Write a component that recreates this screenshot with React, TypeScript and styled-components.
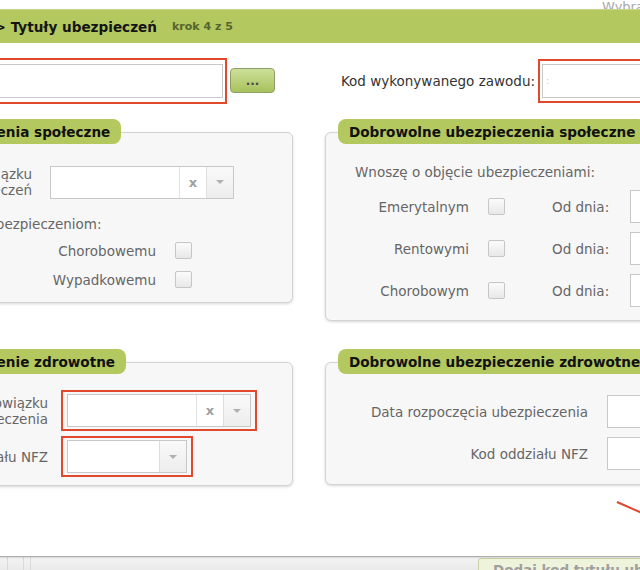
import React from "react";
import styled, { createGlobalStyle } from "styled-components";

// the dialog is wider than the window; this much of it sits left of x=0
const SHIFT = 213;
// left column panels: inner widths measured from the panel's left edge (page x = -SHIFT)
const LEFT_PANEL = SHIFT + 293;

const GlobalStyle = createGlobalStyle`
  html, body {
    margin: 0;
    padding: 0;
    background: #fff;
  }
  body {
    font-family: "DejaVu Sans", Verdana, sans-serif;
    font-size: 13.5px;
    color: #333;
  }
  * {
    box-sizing: border-box;
  }
`;

const Viewport = styled.div`
  position: relative;
  width: 640px;
  height: 570px;
  overflow: hidden;
  background: #fff;
`;

const TopStrip = styled.div`
  height: 9px;
  display: flex;
  overflow: hidden;
  padding-left: 13px;
`;

const PageEdge = styled.div`
  width: 1px;
  background: #e6e6e6;
`;

const BehindText = styled.div`
  margin-left: 589px;
  white-space: nowrap;
  color: #a8a8a8;
  font-size: 13px;
  line-height: 14px;
`;

const Modal = styled.div`
  position: relative;
  z-index: 1;
  width: 1100px;
  height: 547px;
  margin-left: -${SHIFT}px;
  background: #fff;
  box-shadow: 0 1px 2px rgba(0, 0, 0, 0.28);
  display: flex;
  flex-direction: column;
`;

const Header = styled.div`
  height: 34px;
  background: #b3c85e;
  border-top: 1px solid #c6d68a;
  display: flex;
  align-items: center;
`;

const Breadcrumb = styled.div`
  width: ${SHIFT + 157}px;
  text-align: right;
  white-space: nowrap;
  font-size: 13.6px;
  font-weight: bold;
  color: #141414;
`;

const Step = styled.span`
  margin-left: 15px;
  font-size: 11px;
  font-weight: bold;
  color: #56652f;
`;

const TopRow = styled.div`
  display: flex;
  align-items: center;
  height: 47px;
  margin-top: 14px;
`;

const FieldGroup = styled.div<{ $width: number }>`
  width: ${(p) => p.$width}px;
  flex: none;
  display: flex;
  align-items: center;
`;

const HiddenLabel = styled.div`
  width: 188px;
  flex: none;
  padding-left: 20px;
  white-space: nowrap;
  overflow: hidden;
`;

const Frame = styled.div<{ $pad?: string; $grow?: boolean }>`
  display: flex;
  border: 2px solid #e2482c;
  padding: ${(p) => p.$pad || "2px 4px"};
  flex: ${(p) => (p.$grow ? "1 1 auto" : "none")};
`;

const TextInput = styled.div<{ $width?: number; $height?: number }>`
  width: ${(p) => (p.$width ? `${p.$width}px` : "auto")};
  height: ${(p) => p.$height || 33}px;
  border: 1px solid #c8c8c8;
  background: #fff;
  display: flex;
  align-items: center;
  flex: ${(p) => (p.$width ? "none" : "1 1 auto")};
`;

const Mask = styled.span`
  padding-left: 3px;
  font-size: 9px;
  color: #c4c4c4;
`;

const DotsButton = styled.button`
  margin-left: 3px;
  width: 45px;
  height: 25px;
  flex: none;
  padding: 0;
  border: 1px solid #8f9d6c;
  border-radius: 4px;
  background: linear-gradient(#cde09a, #a8c25c);
  color: #4a4a4a;
  font-family: inherit;
  font-size: 12px;
  font-weight: bold;
  line-height: 1;
`;

const RowLabel = styled.div<{ $width: number; $gap?: number }>`
  width: ${(p) => p.$width}px;
  flex: none;
  padding-right: ${(p) => p.$gap || 0}px;
  text-align: right;
  white-space: nowrap;
  color: #333;
`;

const PanelGrid = styled.div`
  display: grid;
  grid-template-columns: ${LEFT_PANEL}px 506px;
  column-gap: 32px;
  row-gap: 28px;
  align-items: start;
  margin-top: 15px;
`;

const Panel = styled.section`
  display: flex;
  flex-direction: column;
  align-items: flex-start;
`;

const Tab = styled.div`
  position: relative;
  z-index: 1;
  height: 25px;
  margin-left: 13px;
  margin-bottom: -12px;
  padding: 0 11px;
  border-radius: 8px;
  background: #b3c85e;
  color: #111;
  font-size: 13.6px;
  font-weight: bold;
  line-height: 26px;
  white-space: nowrap;
`;

const Box = styled.div<{ $top: number; $bottom: number }>`
  align-self: stretch;
  padding: ${(p) => p.$top}px 20px ${(p) => p.$bottom}px 29px;
  border: 1px solid #d3d3d3;
  border-radius: 6px;
  background: #f7f7f7;
  box-shadow: 0 1px 3px rgba(0, 0, 0, 0.16);
  display: flex;
  flex-direction: column;
`;

const Row = styled.div<{ $height?: number; $mt?: number }>`
  display: flex;
  align-items: center;
  height: ${(p) => p.$height || 33}px;
  margin-top: ${(p) => p.$mt || 0}px;
`;

const Label = styled.div<{ $width: number }>`
  width: ${(p) => p.$width}px;
  flex: none;
  text-align: right;
  white-space: nowrap;
  color: #666;
  line-height: 16px;
`;

const Note = styled.div<{ $mt?: number; $indent?: number }>`
  height: 18px;
  line-height: 18px;
  margin-top: ${(p) => p.$mt || 0}px;
  padding-left: ${(p) => p.$indent || 0}px;
  white-space: nowrap;
  color: #666;
`;

const Spacer = styled.div<{ $w: number }>`
  width: ${(p) => p.$w}px;
  flex: none;
`;

const Checkbox = styled.span`
  width: 17px;
  height: 17px;
  flex: none;
  border: 1px solid #c6c6c6;
  border-radius: 2px;
  background: linear-gradient(#fbfbfb, #e8e8e8);
`;

const Inline = styled.div<{ $width: number }>`
  width: ${(p) => p.$width}px;
  flex: none;
  color: #666;
  white-space: nowrap;
`;

const Combo = styled.div<{ $width: number }>`
  width: ${(p) => p.$width}px;
  height: 33px;
  flex: none;
  display: flex;
  border: 1px solid #c8c8c8;
  background: #fff;
`;

const ComboValue = styled.div`
  flex: 1;
`;

const ClearCell = styled.div`
  width: 27px;
  border-left: 1px solid #e2e2e2;
  display: flex;
  align-items: center;
  justify-content: center;
  color: #a0a0a0;
  font-size: 13px;
  font-weight: bold;
`;

const ArrowCell = styled.div`
  width: 27px;
  border-left: 1px solid #dedede;
  background: linear-gradient(#f9f9f9, #ededed);
  display: flex;
  align-items: center;
  justify-content: center;

  &::after {
    content: "";
    border-left: 4px solid transparent;
    border-right: 4px solid transparent;
    border-top: 4px solid #b0b0b0;
  }
`;

const BottomStrip = styled.div`
  height: 14px;
  display: flex;
  align-items: flex-start;
  border-top: 1px solid #d6d6d6;
  background: linear-gradient(#f3f3f3, #eaeaea);
`;

const Rule = styled.div<{ $ml: number }>`
  width: 1px;
  height: 100%;
  margin-left: ${(p) => p.$ml}px;
  background: #dadada;
  flex: none;
`;

const AddButton = styled.div`
  margin-left: 447px;
  margin-top: 1px;
  height: 20px;
  padding: 3px 14px 0;
  border: 1px solid #c9d2a6;
  border-radius: 3px;
  background: #eef3dc;
  color: #a0a0a0;
  font-weight: bold;
  white-space: nowrap;
`;

const Pointer = styled.svg`
  position: absolute;
  left: 600px;
  top: 490px;
  z-index: 2;
`;

const ComboBox: React.FC<{ width: number; clear?: boolean }> = ({ width, clear }) => (
  <Combo $width={width}>
    <ComboValue />
    {clear && <ClearCell>x</ClearCell>}
    <ArrowCell />
  </Combo>
);

const voluntary = ["Emerytalnym", "Rentowymi", "Chorobowym"];

export default function App() {
  return (
    <>
      <GlobalStyle />
      <Viewport>
        <TopStrip>
          <PageEdge />
          <BehindText>Wybrano tytuł</BehindText>
        </TopStrip>

        <Modal>
          <Header>
            <Breadcrumb>Ubezpieczony &gt; Tytuły ubezpieczeń</Breadcrumb>
            <Step>krok 4 z 5</Step>
          </Header>

          <TopRow>
            <FieldGroup $width={SHIFT + 227}>
              <HiddenLabel>Kod tytułu ubezpieczenia:</HiddenLabel>
              <Frame $pad="4px 2px" $grow>
                <TextInput $height={34} />
              </Frame>
            </FieldGroup>
            <DotsButton>...</DotsButton>
            <RowLabel $width={263} $gap={3}>
              Kod wykonywanego zawodu:
            </RowLabel>
            <Frame $pad="3px 2px">
              <TextInput $width={300} $height={34}>
                <Mask>:</Mask>
              </TextInput>
            </Frame>
          </TopRow>

          <PanelGrid>
            <Panel>
              <Tab>Obowiązkowe ubezpieczenia społeczne</Tab>
              <Box $top={32} $bottom={8}>
                <Row $height={34}>
                  <Label $width={SHIFT + 2}>
                    Rodzaj obowiązku
                    <br />
                    ubezpieczeń
                  </Label>
                  <Spacer $w={18} />
                  <ComboBox width={184} clear />
                </Row>
                <Note $mt={16} $indent={SHIFT - 208}>
                  Podlegam obowiązkowo ubezpieczeniom:
                </Note>
                <Row $height={29} $mt={3}>
                  <Label $width={SHIFT + 126}>Chorobowemu</Label>
                  <Spacer $w={19} />
                  <Checkbox />
                </Row>
                <Row $height={29}>
                  <Label $width={SHIFT + 126}>Wypadkowemu</Label>
                  <Spacer $w={19} />
                  <Checkbox />
                </Row>
              </Box>
            </Panel>

            <Panel>
              <Tab>Dobrowolne ubezpieczenia społeczne</Tab>
              <Box $top={30} $bottom={13}>
                <Note>Wnoszę o objęcie ubezpieczeniami:</Note>
                {voluntary.map((name) => (
                  <Row key={name} $mt={9}>
                    <Label $width={114}>{name}</Label>
                    <Spacer $w={19} />
                    <Checkbox />
                    <Spacer $w={47} />
                    <Inline $width={78}>Od dnia:</Inline>
                    <TextInput $width={120} />
                  </Row>
                ))}
              </Box>
            </Panel>

            <Panel>
              <Tab>Obowiązkowe ubezpieczenie zdrowotne</Tab>
              <Box $top={27} $bottom={8}>
                <Row $height={41}>
                  <Label $width={SHIFT + 18}>
                    Tytuł obowiązku
                    <br />
                    ubezpieczenia
                  </Label>
                  <Spacer $w={13} />
                  <Frame>
                    <ComboBox width={184} clear />
                  </Frame>
                </Row>
                <Row $height={41} $mt={5}>
                  <Label $width={SHIFT + 18}>Kod oddziału NFZ</Label>
                  <Spacer $w={13} />
                  <Frame>
                    <ComboBox width={120} />
                  </Frame>
                </Row>
              </Box>
            </Panel>

            <Panel>
              <Tab>Dobrowolne ubezpieczenie zdrowotne</Tab>
              <Box $top={32} $bottom={14}>
                <Row>
                  <Label $width={233}>Data rozpoczęcia ubezpieczenia</Label>
                  <Spacer $w={19} />
                  <TextInput $width={120} />
                </Row>
                <Row $mt={9}>
                  <Label $width={233}>Kod oddziału NFZ</Label>
                  <Spacer $w={19} />
                  <TextInput $width={120} />
                </Row>
              </Box>
            </Panel>
          </PanelGrid>
        </Modal>

        <BottomStrip>
          <Rule $ml={7} />
          <Rule $ml={15} />
          <Rule $ml={6} />
          <AddButton>Dodaj kod tytułu ubezpieczenia</AddButton>
        </BottomStrip>

        <Pointer width="60" height="40" viewBox="0 0 60 40">
          <line x1="17" y1="12" x2="60" y2="31" stroke="#e2482c" strokeWidth="2" />
        </Pointer>
      </Viewport>
    </>
  );
}
